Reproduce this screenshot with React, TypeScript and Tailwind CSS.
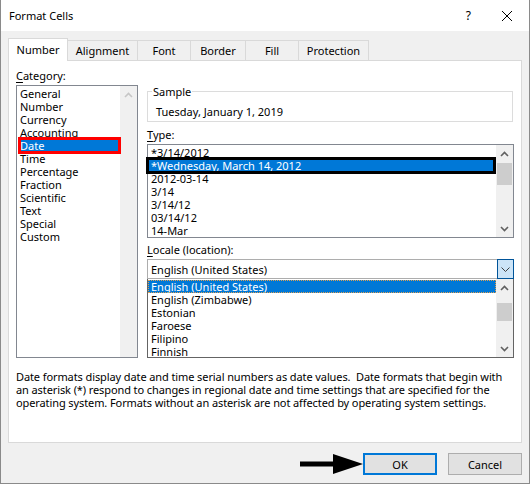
import React from 'react';

const categories = ['General', 'Number', 'Currency', 'Accounting', 'Date', 'Time', 'Percentage', 'Fraction', 'Scientific', 'Text', 'Special', 'Custom'];
const types = ['*3/14/2012', '*Wednesday, March 14, 2012', '2012-03-14', '3/14', '3/14/12', '03/14/12', '14-Mar'];
const locales = ['English (United States)', 'English (Zimbabwe)', 'Estonian', 'Faroese', 'Filipino', 'Finnish'];

const Chevron: React.FC<{ up?: boolean; color?: string }> = ({ up, color = '#606060' }) => (
  <svg width="9" height="6" viewBox="0 0 9 6">
    <polyline
      points={up ? '1,5 4.5,1.5 8,5' : '1,1 4.5,4.5 8,1'}
      fill="none"
      stroke={color}
      strokeWidth="1.6"
    />
  </svg>
);

const ScrollBar: React.FC<{ thumbTop?: number; thumbHeight?: number; disabled?: boolean }> = ({ thumbTop, thumbHeight, disabled }) => (
  <div className="w-[17px] bg-[#f0f0f0] flex flex-col shrink-0">
    <div className="h-[17px] flex items-center justify-center">
      <Chevron up color={disabled ? '#c6c6c6' : '#606060'} />
    </div>
    <div className="flex-1 flex flex-col">
      {thumbHeight ? (
        <div className="bg-[#cdcdcd] mx-[1px]" style={{ marginTop: thumbTop, height: thumbHeight }} />
      ) : null}
    </div>
    <div className="h-[17px] flex items-center justify-center">
      {disabled ? null : <Chevron />}
    </div>
  </div>
);

const tabs = [
  { label: 'Alignment', w: 'w-[70px]' },
  { label: 'Font', w: 'w-[53px]' },
  { label: 'Border', w: 'w-[55px]' },
  { label: 'Fill', w: 'w-[53px]' },
  { label: 'Protection', w: 'w-[70px]' },
];

export default function App() {
  return (
    <div className="w-[530px] h-[484px] bg-[#f0f0f0] border-x border-b border-[#8a8a8a] flex flex-col text-[11px] leading-[13px] text-black font-['Noto_Sans',sans-serif] select-none">
      {/* title bar */}
      <div className="h-[31px] bg-white flex items-center pl-[8px] pr-[16px] shrink-0">
        <span>Format Cells</span>
        <div className="ml-auto flex items-center gap-[30px]">
          <span className="text-[12px]">?</span>
          <svg width="12" height="12" viewBox="0 0 12 12">
            <path d="M1 1 L11 11 M11 1 L1 11" stroke="#000" strokeWidth="1" />
          </svg>
        </div>
      </div>

      {/* tabs */}
      <div className="flex items-end h-[22px] mt-[7px] pl-[7px] shrink-0">
        <div className="relative z-10 w-[60px] h-[23px] -mb-px bg-white border border-b-0 border-[#d9d9d9] flex items-center justify-center pb-[2px]">
          Number
        </div>
        {tabs.map((t) => (
          <div
            key={t.label}
            className={`${t.w} h-[20px] border-t border-r border-[#d9d9d9] bg-[#f0f0f0] flex items-center justify-center`}
          >
            {t.label}
          </div>
        ))}
      </div>

      {/* panel */}
      <div className="ml-[7px] w-[514px] h-[383px] bg-white border border-[#d9d9d9] flex flex-col shrink-0">
        <div className="flex pt-[8px] pl-[7px]">
          {/* category */}
          <div className="w-[122px] flex flex-col">
            <div>
              <span className="underline underline-offset-[2px]">C</span>ategory:
            </div>
            <div className="mt-[3px] h-[273px] border border-[#828790] flex">
              <div className="flex-1 pt-[1px] flex flex-col">
                {categories.map((c) =>
                  c === 'Date' ? (
                    <div
                      key={c}
                      className="relative z-10 h-[13px] ml-[3px] mr-[1px] bg-[#0078d7] text-white outline-[3px] outline-[#ff0000] outline-offset-[-1px]"
                    >
                      {c}
                    </div>
                  ) : (
                    <div key={c} className="h-[13px] pl-[3px]">
                      {c}
                    </div>
                  )
                )}
              </div>
              <ScrollBar disabled />
            </div>
          </div>

          {/* right side */}
          <div className="ml-[9px] w-[367px] flex flex-col">
            <fieldset className="mt-[16px] w-[366px] border border-[#dcdcdc] pb-[3px]">
              <legend className="ml-[4px] px-[1px]">Sample</legend>
              <div className="pt-[7px] pl-[8px]">Tuesday, January 1, 2019</div>
            </fieldset>

            <div className="mt-[6px]">
              <span className="underline underline-offset-[2px]">T</span>ype:
            </div>
            <div className="mt-[3px] h-[94px] border border-[#828790] flex">
              <div className="flex-1 pt-[1px] flex flex-col">
                {types.map((t, i) =>
                  i === 1 ? (
                    <div
                      key={t}
                      className="relative z-10 h-[13px] pl-[3px] bg-[#0078d7] text-white outline-[3px] outline-black outline-offset-[-1px] mr-[2px]"
                    >
                      {t}
                    </div>
                  ) : (
                    <div key={t} className="h-[13px] pl-[3px]">
                      {t}
                    </div>
                  )
                )}
              </div>
              <ScrollBar thumbTop={1} thumbHeight={22} />
            </div>

            <div className="mt-[5px]">
              <span className="underline underline-offset-[2px]">L</span>ocale (location):
            </div>
            <div className="mt-[3px] h-[20px] border border-[#adadad] flex items-center">
              <div className="flex-1 pl-[3px]">English (United States)</div>
              <div className="w-[17px] h-[20px] -my-px -mr-px bg-[#cce4f7] border border-[#005499] flex items-center justify-center">
                <svg width="9" height="5" viewBox="0 0 9 5">
                  <polyline points="0.5,0.5 4.5,4.5 8.5,0.5" fill="none" stroke="#404040" strokeWidth="1" />
                </svg>
              </div>
            </div>
            <div className="h-[79px] border-x border-b border-[#646464] flex">
              <div className="flex-1 pt-[1px] flex flex-col">
                {locales.map((l, i) =>
                  i === 0 ? (
                    <div
                      key={l}
                      className="h-[13px] pl-[3px] bg-[#0078d7] text-white outline-1 outline-dotted outline-[#e0a050] outline-offset-[-1px]"
                    >
                      {l}
                    </div>
                  ) : (
                    <div key={l} className="h-[13px] pl-[3px]">
                      {l}
                    </div>
                  )
                )}
              </div>
              <ScrollBar thumbTop={7} thumbHeight={18} />
            </div>
          </div>
        </div>

        <p className="mt-[12px] pl-[7px] tracking-[-0.1px]">
          {'Date formats display date and time serial numbers as date values.\u00a0 Date formats that begin with'}
          <br />
          an asterisk (*) respond to changes in regional date and time settings that are specified for the
          <br />
          operating system. Formats without an asterisk are not affected by operating system settings.
        </p>
      </div>

      {/* buttons */}
      <div className="mt-[10px] pr-[7px] flex items-center justify-end">
        <svg width="63" height="22" viewBox="0 0 63 22">
          <rect x="0" y="8.5" width="35" height="5" fill="#000" />
          <polygon points="33,1 63,11 33,21" fill="#000" />
        </svg>
        <div className="w-[74px] h-[22px] border-2 border-[#0078d7] bg-[#e1e1e1] flex items-center justify-center">
          OK
        </div>
        <div className="ml-[11px] w-[74px] h-[22px] border border-[#adadad] bg-[#e1e1e1] flex items-center justify-center">
          Cancel
        </div>
      </div>
    </div>
  );
}
